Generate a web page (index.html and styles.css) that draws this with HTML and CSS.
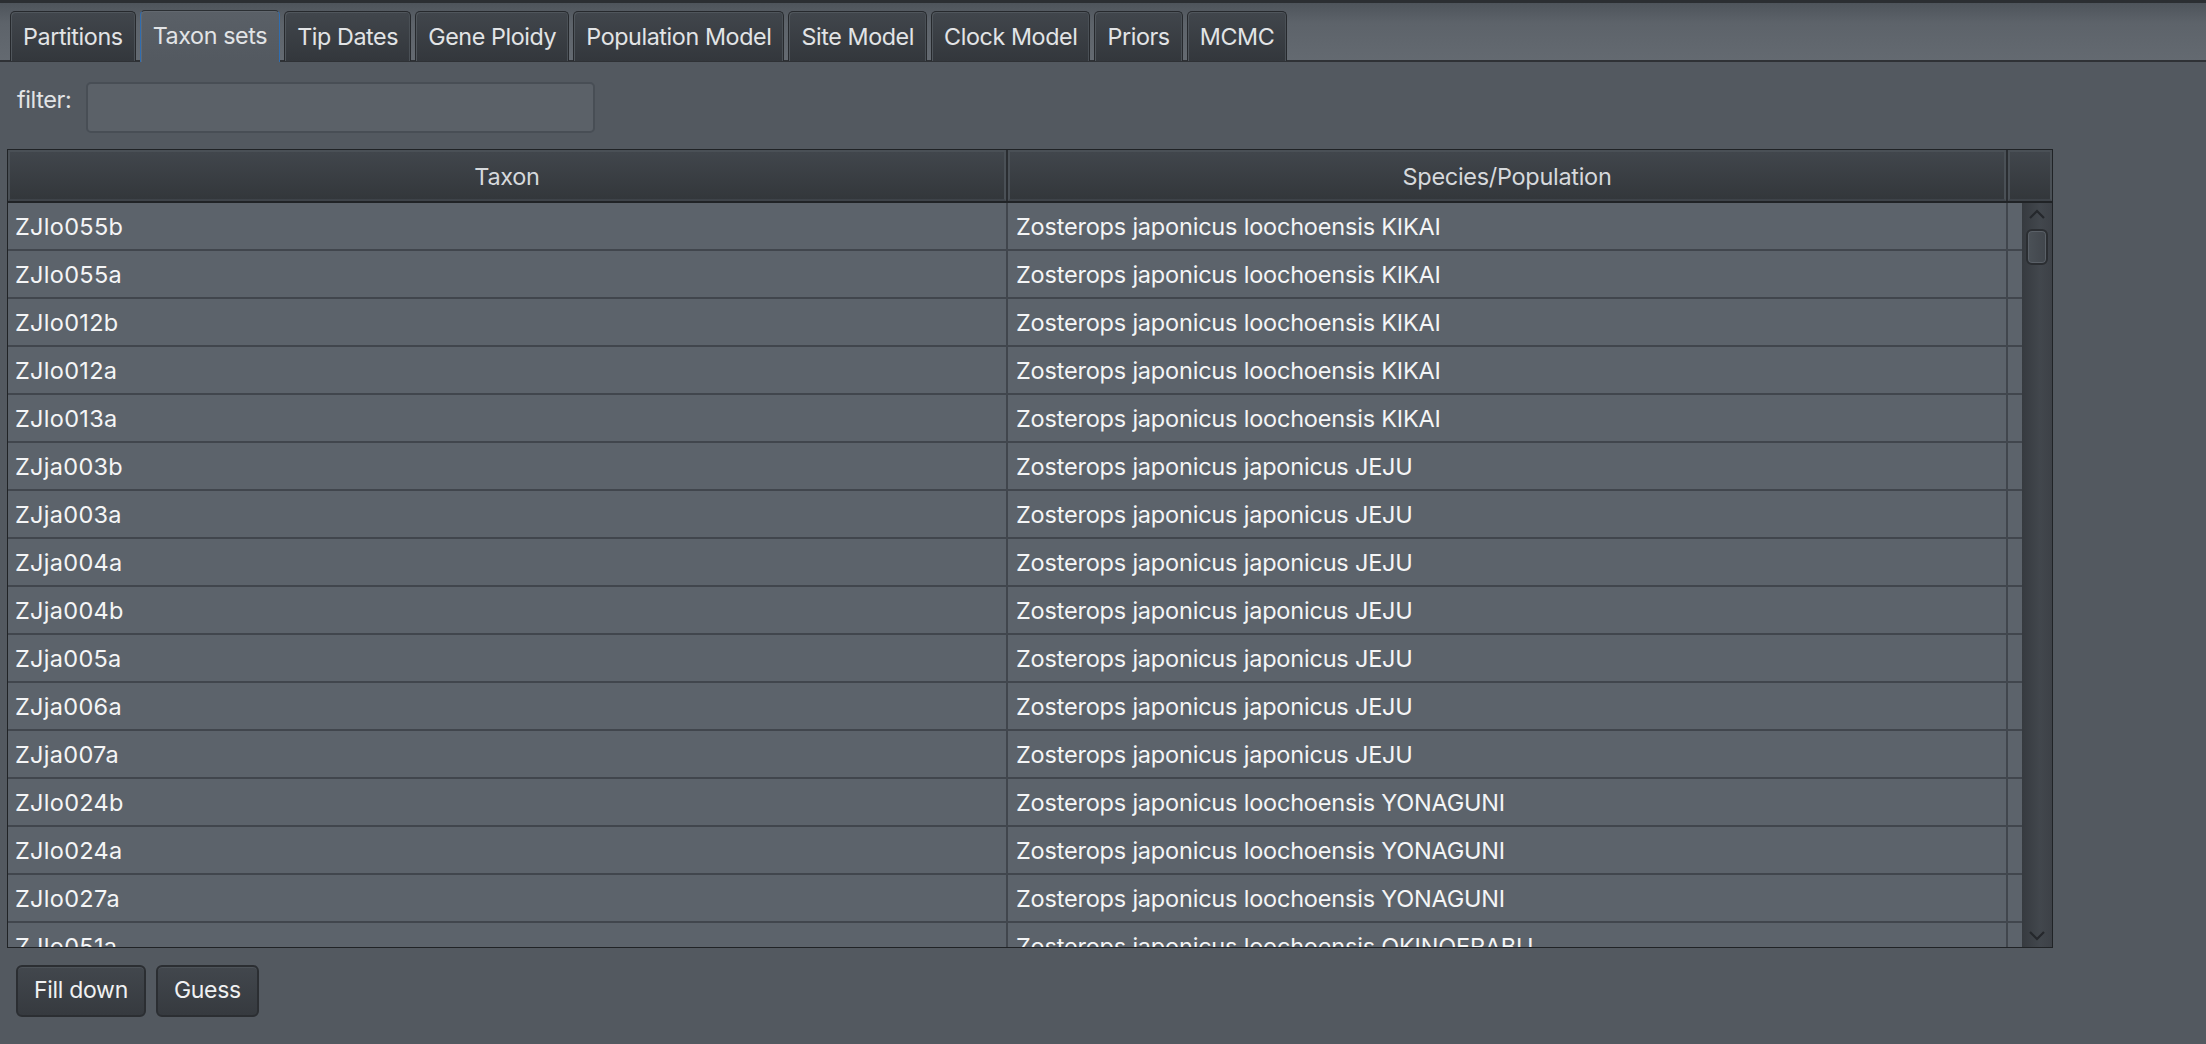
FILE: index.html
```html
<!DOCTYPE html>
<html>
<head>
<meta charset="utf-8">
<link rel="stylesheet" href="styles.css">
</head>
<body>
<div class="window">
  <div class="tabstrip">
    <div class="tab">Partitions</div>
    <div class="tab selected">Taxon sets</div>
    <div class="tab">Tip Dates</div>
    <div class="tab">Gene Ploidy</div>
    <div class="tab">Population Model</div>
    <div class="tab">Site Model</div>
    <div class="tab">Clock Model</div>
    <div class="tab">Priors</div>
    <div class="tab">MCMC</div>
  </div>
  <div class="panel">
    <div class="filter-row">
      <span class="filter-label">filter:</span>
      <div class="filter-input"></div>
    </div>
    <div class="table">
      <div class="thead">
        <div class="th c1">Taxon</div>
        <div class="th c2">Species/Population</div>
        <div class="th corner"></div>
      </div>
      <div class="tbody">
        <div class="rows">
          <div class="row"><div class="td c1">ZJlo055b</div><div class="td c2">Zosterops japonicus loochoensis KIKAI</div><div class="td c3"></div></div>
          <div class="row"><div class="td c1">ZJlo055a</div><div class="td c2">Zosterops japonicus loochoensis KIKAI</div><div class="td c3"></div></div>
          <div class="row"><div class="td c1">ZJlo012b</div><div class="td c2">Zosterops japonicus loochoensis KIKAI</div><div class="td c3"></div></div>
          <div class="row"><div class="td c1">ZJlo012a</div><div class="td c2">Zosterops japonicus loochoensis KIKAI</div><div class="td c3"></div></div>
          <div class="row"><div class="td c1">ZJlo013a</div><div class="td c2">Zosterops japonicus loochoensis KIKAI</div><div class="td c3"></div></div>
          <div class="row"><div class="td c1">ZJja003b</div><div class="td c2">Zosterops japonicus japonicus JEJU</div><div class="td c3"></div></div>
          <div class="row"><div class="td c1">ZJja003a</div><div class="td c2">Zosterops japonicus japonicus JEJU</div><div class="td c3"></div></div>
          <div class="row"><div class="td c1">ZJja004a</div><div class="td c2">Zosterops japonicus japonicus JEJU</div><div class="td c3"></div></div>
          <div class="row"><div class="td c1">ZJja004b</div><div class="td c2">Zosterops japonicus japonicus JEJU</div><div class="td c3"></div></div>
          <div class="row"><div class="td c1">ZJja005a</div><div class="td c2">Zosterops japonicus japonicus JEJU</div><div class="td c3"></div></div>
          <div class="row"><div class="td c1">ZJja006a</div><div class="td c2">Zosterops japonicus japonicus JEJU</div><div class="td c3"></div></div>
          <div class="row"><div class="td c1">ZJja007a</div><div class="td c2">Zosterops japonicus japonicus JEJU</div><div class="td c3"></div></div>
          <div class="row"><div class="td c1">ZJlo024b</div><div class="td c2">Zosterops japonicus loochoensis YONAGUNI</div><div class="td c3"></div></div>
          <div class="row"><div class="td c1">ZJlo024a</div><div class="td c2">Zosterops japonicus loochoensis YONAGUNI</div><div class="td c3"></div></div>
          <div class="row"><div class="td c1">ZJlo027a</div><div class="td c2">Zosterops japonicus loochoensis YONAGUNI</div><div class="td c3"></div></div>
          <div class="row"><div class="td c1">ZJlo051a</div><div class="td c2">Zosterops japonicus loochoensis OKINOERABU</div><div class="td c3"></div></div>
        </div>
        <div class="scrollbar">
          <svg class="arrow up" width="20" height="12" viewBox="0 0 20 12"><path d="M3 10 L10 3 L17 10" fill="none" stroke="#25282c" stroke-width="2.2"/></svg>
          <div class="thumb"></div>
          <div class="track"></div>
          <svg class="arrow down" width="20" height="12" viewBox="0 0 20 12"><path d="M3 2 L10 9 L17 2" fill="none" stroke="#25282c" stroke-width="2.2"/></svg>
        </div>
      </div>
    </div>
    <div class="buttons">
      <div class="btn">Fill down</div>
      <div class="btn">Guess</div>
    </div>
  </div>
</div>
</body>
</html>
```

FILE: styles.css
```css
html, body {
  margin: 0;
  padding: 0;
}
body {
  width: 2206px;
  height: 1044px;
  overflow: hidden;
  background: #535960;
  font-family: Inter, "Noto Sans", sans-serif;
  color: #f0f1f2;
}
.window {
  display: flex;
  flex-direction: column;
  height: 1044px;
}
.tabstrip {
  height: 62px;
  box-sizing: border-box;
  border-top: 3px solid #2b2e32;
  background: linear-gradient(to bottom, #4e545b 0px, #5d636a 20px, #646a71 59px);
  border-bottom: 2px solid #2f3236;
  display: flex;
  align-items: flex-end;
  padding-left: 10px;
  gap: 4px;
}
.tab {
  height: 50px;
  box-sizing: border-box;
  margin-bottom: -1px;
  padding: 0 12px;
  display: flex;
  align-items: center;
  font-size: 23.3px;
  letter-spacing: -0.4px;
  color: #e2e4e6;
  background: linear-gradient(to bottom, #41464c, #33373c);
  border: 1px solid #26292d;
  border-bottom: none;
  border-radius: 5px 5px 0 0;
  box-shadow: inset 1px 1px 0 #50565c, inset -1px 0 0 #4a5056;
}
.tab.selected {
  background: linear-gradient(to bottom, #5a6067, #535960);
  border: 1px solid #2b2f33;
  border-left: 1px solid #2f6db0;
  border-right: 1px solid #2f6db0;
  border-bottom: none;
  height: 52px;
  margin-bottom: -2px;
  box-shadow: inset 1px 1px 0 #62686f;
  padding-bottom: 2px;
  position: relative;
  z-index: 1;
}
.panel {
  flex: 1;
  display: flex;
  flex-direction: column;
  padding: 0 0 0 7px;
}
.filter-row {
  display: flex;
  align-items: center;
  height: 50px;
  margin-top: 20px;
  margin-left: 10px;
  gap: 15px;
}
.filter-label {
  font-size: 23.5px;
  letter-spacing: -0.4px;
  color: #e2e4e6;
  margin-bottom: 16px;
}
.filter-input {
  width: 509px;
  height: 51px;
  box-sizing: border-box;
  background: #5b6168;
  border: 2px solid #484e55;
  border-radius: 5px;
}
.table {
  margin-top: 17px;
  width: 2046px;
  height: 799px;
  box-sizing: border-box;
  border: 1px solid #202326;
  display: flex;
  flex-direction: column;
  background: #5c636b;
}
.thead {
  height: 53px;
  box-sizing: border-box;
  display: flex;
  background: #2a2d31;
  gap: 2px;
  border-bottom: 2px solid #202326;
}
.th {
  box-sizing: border-box;
  background: linear-gradient(to bottom, #41464c, #33373b);
  border: 2px solid #4a5056;
  border-bottom-color: #3e4349;
  display: flex;
  align-items: center;
  justify-content: center;
  font-size: 23.5px;
  letter-spacing: -0.3px;
  color: #d6d9dc;
  padding-top: 2px;
}
.th.c1 { width: 998px; }
.th.c2 { width: 998px; }
.th.corner { flex: 1; }
.tbody {
  flex: 1;
  display: flex;
  overflow: hidden;
}
.rows {
  flex: 1;
  overflow: hidden;
}
.row {
  display: flex;
  height: 48px;
  box-sizing: border-box;
  border-bottom: 2px solid #41464d;
}
.td {
  box-sizing: border-box;
  border-right: 2px solid #41464d;
  display: flex;
  align-items: center;
  font-size: 23.5px;
  color: #f4f5f6;
  padding-left: 7px;
}
.td.c1 { width: 1000px; letter-spacing: 0.3px; }
.td.c2 { width: 1000px; padding-left: 8px; letter-spacing: -0.2px; }
.td.c3 { flex: 1; border-right: none; }
.scrollbar {
  width: 30px;
  background: linear-gradient(to right, #363a3f, #42474d 60%, #3d4147);
  display: flex;
  flex-direction: column;
  align-items: center;
}
.arrow { display: block; }
.arrow.up { margin-top: 5px; }
.arrow.down { margin-bottom: 5px; }
.thumb {
  margin-top: 9px;
  width: 22px;
  height: 36px;
  box-sizing: border-box;
  border: 2px solid #2b2e32;
  border-radius: 6px;
  background: linear-gradient(to right, #4b5157, #41464c);
  box-shadow: inset 0 0 0 1px #5a6067;
}
.track { flex: 1; }
.buttons {
  display: flex;
  gap: 10px;
  margin-top: 17px;
  margin-left: 9px;
}
.btn {
  height: 52px;
  box-sizing: border-box;
  padding: 0 16px;
  display: flex;
  align-items: center;
  font-size: 23px;
  letter-spacing: -0.3px;
  color: #f0f1f2;
  background: linear-gradient(to bottom, #42474d, #363a3f);
  border: 2px solid #2b2e32;
  border-radius: 6px;
  box-shadow: inset 0 1px 0 #4d5359;
  padding-bottom: 2px;
}
```
